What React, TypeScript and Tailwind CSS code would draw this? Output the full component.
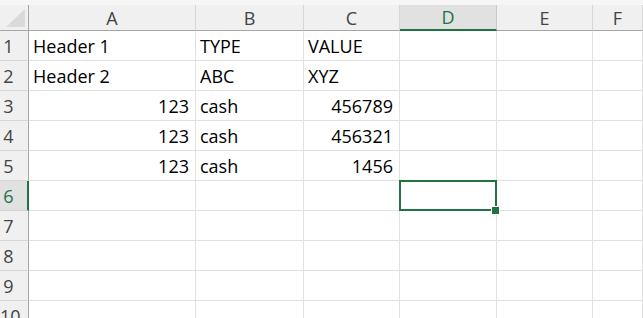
import React from 'react';

const columns = ['A', 'B', 'C', 'D', 'E', 'F'];

type Cell = { text: string; right?: boolean };

const data: Record<number, Cell[]> = {
    1: [{ text: 'Header 1' }, { text: 'TYPE' }, { text: 'VALUE' }],
    2: [{ text: 'Header 2' }, { text: 'ABC' }, { text: 'XYZ' }],
    3: [{ text: '123', right: true }, { text: 'cash' }, { text: '456789', right: true }],
    4: [{ text: '123', right: true }, { text: 'cash' }, { text: '456321', right: true }],
    5: [{ text: '123', right: true }, { text: 'cash' }, { text: '1456', right: true }],
};

const rows = [1, 2, 3, 4, 5, 6, 7, 8, 9, 10];

export default function App() {
    return (
        <div className="w-[643px] h-[318px] overflow-hidden bg-white font-['Open_Sans',sans-serif] text-[18px] leading-none">
            <div className="h-[5px] bg-[#f6f6f6]" />
            <div className="grid grid-cols-[29px_167px_108px_96px_97px_96px_1fr]">
                {/* corner */}
                <div className="h-[26px] bg-[#f0f0f0] border-r border-b border-[#a6a6a6] relative">
                    <svg width="29" height="26" viewBox="0 0 29 26" className="block">
                        <polygon points="6,22 25,22 25,4" fill="#dadada" />
                    </svg>
                </div>
                {columns.map((c) => {
                    const active = c === 'D';
                    return (
                        <div
                            key={c}
                            className={
                                active
                                    ? 'h-[26px] flex items-center justify-center bg-[#e1e1e1] border-r border-[#c8c8c8] border-b-2 border-b-[#217346] text-[#217346]'
                                    : 'h-[26px] flex items-center justify-center bg-[#f0f0f0] border-r border-[#d6d6d6] border-b border-b-[#a6a6a6] text-[#444]'
                            }
                        >
                            {c}
                        </div>
                    );
                })}

                {rows.map((r) => {
                    const active = r === 6;
                    const cells = data[r] || [];
                    return (
                        <React.Fragment key={r}>
                            <div
                                className={
                                    active
                                        ? 'h-[30px] flex items-center bg-[#e1e1e1] border-r-2 border-r-[#217346] border-b border-b-[#d0d0d0] text-[#217346]'
                                        : 'h-[30px] flex items-center bg-[#f0f0f0] border-r border-r-[#a6a6a6] border-b border-b-[#d6d6d6] text-[#444]'
                                }
                            >
                                <span className="w-[17px] text-center">{r}</span>
                            </div>
                            {columns.map((c, i) => {
                                const cell = cells[i];
                                const selected = active && c === 'D';
                                return (
                                    <div
                                        key={c}
                                        className={
                                            'h-[30px] flex items-center border-r border-b border-[#e1e1e1] text-black whitespace-nowrap relative ' +
                                            (cell?.right ? 'justify-end pr-[6px]' : 'pl-[4px]') +
                                            (selected ? ' z-10' : '')
                                        }
                                    >
                                        {cell?.text}
                                        {selected && (
                                            <>
                                                <div className="absolute -left-px -top-px -right-px -bottom-px border-2 border-[#217346]" />
                                                <div className="absolute -right-[3px] -bottom-[4px] w-[7px] h-[7px] bg-[#217346] outline outline-1 outline-white" />
                                            </>
                                        )}
                                    </div>
                                );
                            })}
                        </React.Fragment>
                    );
                })}
            </div>
        </div>
    );
}
